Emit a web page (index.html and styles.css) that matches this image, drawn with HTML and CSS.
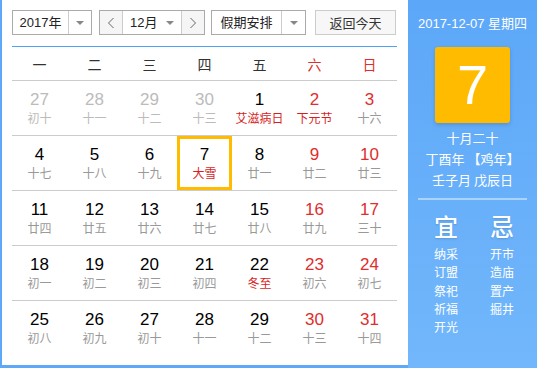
FILE: index.html
```html
<!doctype html>
<html>
  <head>
    <meta charset="UTF-8">
    <title>万年历</title>
    <link rel="stylesheet" href="styles.css">
  </head>
  <body>
    <div class="calendar">
      <main class="main">
        <div class="controls">
          <div class="select year">
            <span class="select-value">2017年</span>
            <span class="select-arrow"><i class="caret"></i></span>
          </div>
          <div class="select month">
            <span class="nav-btn">
              <svg width="8" height="12" viewBox="0 0 8 12"><path d="M6.5 1 L1.5 6 L6.5 11" fill="none" stroke="#666" stroke-width="1"/></svg>
            </span>
            <span class="select-value month-value">12月 <i class="caret"></i></span>
            <span class="nav-btn">
              <svg width="8" height="12" viewBox="0 0 8 12"><path d="M1.5 1 L6.5 6 L1.5 11" fill="none" stroke="#666" stroke-width="1"/></svg>
            </span>
          </div>
          <div class="select holiday">
            <span class="select-value">假期安排</span>
            <span class="select-arrow"><i class="caret"></i></span>
          </div>
          <button class="today-btn">返回今天</button>
        </div>

        <div class="grid">
          <div class="row head">
            <span>一</span><span>二</span><span>三</span><span>四</span><span>五</span><span class="red">六</span><span class="red">日</span>
          </div>
          <div class="row">
            <div class="cell other"><b>27</b><small>初十</small></div>
            <div class="cell other"><b>28</b><small>十一</small></div>
            <div class="cell other"><b>29</b><small>十二</small></div>
            <div class="cell other"><b>30</b><small>十三</small></div>
            <div class="cell"><b>1</b><small class="fest">艾滋病日</small></div>
            <div class="cell weekend"><b>2</b><small class="fest">下元节</small></div>
            <div class="cell weekend"><b>3</b><small>十六</small></div>
          </div>
          <div class="row">
            <div class="cell"><b>4</b><small>十七</small></div>
            <div class="cell"><b>5</b><small>十八</small></div>
            <div class="cell"><b>6</b><small>十九</small></div>
            <div class="cell today"><b>7</b><small class="fest">大雪</small></div>
            <div class="cell"><b>8</b><small>廿一</small></div>
            <div class="cell weekend"><b>9</b><small>廿二</small></div>
            <div class="cell weekend"><b>10</b><small>廿三</small></div>
          </div>
          <div class="row">
            <div class="cell"><b>11</b><small>廿四</small></div>
            <div class="cell"><b>12</b><small>廿五</small></div>
            <div class="cell"><b>13</b><small>廿六</small></div>
            <div class="cell"><b>14</b><small>廿七</small></div>
            <div class="cell"><b>15</b><small>廿八</small></div>
            <div class="cell weekend"><b>16</b><small>廿九</small></div>
            <div class="cell weekend"><b>17</b><small>三十</small></div>
          </div>
          <div class="row">
            <div class="cell"><b>18</b><small>初一</small></div>
            <div class="cell"><b>19</b><small>初二</small></div>
            <div class="cell"><b>20</b><small>初三</small></div>
            <div class="cell"><b>21</b><small>初四</small></div>
            <div class="cell"><b>22</b><small class="fest">冬至</small></div>
            <div class="cell weekend"><b>23</b><small>初六</small></div>
            <div class="cell weekend"><b>24</b><small>初七</small></div>
          </div>
          <div class="row">
            <div class="cell"><b>25</b><small>初八</small></div>
            <div class="cell"><b>26</b><small>初九</small></div>
            <div class="cell"><b>27</b><small>初十</small></div>
            <div class="cell"><b>28</b><small>十一</small></div>
            <div class="cell"><b>29</b><small>十二</small></div>
            <div class="cell weekend"><b>30</b><small>十三</small></div>
            <div class="cell weekend"><b>31</b><small>十四</small></div>
          </div>
        </div>
      </main>

      <aside class="side">
        <div class="side-date">2017-12-07 星期四</div>
        <div class="big-day">7</div>
        <div class="lunar">
          <p>十月二十</p>
          <p>丁酉年 【鸡年】</p>
          <p>壬子月 戊辰日</p>
        </div>
        <div class="divider"></div>
        <div class="advice">
          <div class="advice-col">
            <h2>宜</h2>
            <p>纳采</p><p>订盟</p><p>祭祀</p><p>祈福</p><p>开光</p>
          </div>
          <div class="advice-col">
            <h2>忌</h2>
            <p>开市</p><p>造庙</p><p>置产</p><p>掘井</p>
          </div>
        </div>
      </aside>
    </div>
  </body>
</html>
```

FILE: styles.css
```css
* {
    box-sizing: border-box;
}

body {
    margin: 0;
    font-family: "Liberation Sans", "Noto Sans CJK SC", sans-serif;
    color: #333;
}

.calendar {
    display: flex;
    width: 537px;
    height: 368px;
    border-left: 2px solid #5ea8f8;
    border-bottom: 3px solid #5ea8f8;
    background: #fff;
}

.main {
    width: 406px;
    padding: 10px 11px 0 10px;
}

/* controls */

.controls {
    display: flex;
    height: 25px;
}

.select {
    display: flex;
    height: 25px;
    border: 1px solid #aaa;
    font-size: 13px;
    line-height: 23px;
    color: #222;
}

.year {
    width: 80px;
}

.year .select-value {
    width: 55px;
    text-align: center;
}

.select-arrow {
    flex: 1;
    display: flex;
    align-items: center;
    justify-content: center;
    border-left: 1px solid #ccc;
}

.caret {
    display: inline-block;
    width: 0;
    height: 0;
    border-left: 4px solid transparent;
    border-right: 4px solid transparent;
    border-top: 4px solid #888;
    vertical-align: middle;
}

.month {
    width: 106px;
    margin-left: 7px;
}

.nav-btn {
    width: 22px;
    display: flex;
    align-items: center;
    justify-content: center;
    background: #f5f5f5;
}

.month-value {
    width: 60px;
    text-align: center;
    border-left: 1px solid #ccc;
    border-right: 1px solid #ccc;
}

.month-value .caret {
    margin-left: 5px;
    margin-top: -2px;
}

.holiday {
    width: 95px;
    margin-left: 6px;
}

.holiday .select-value {
    width: 69px;
    text-align: center;
}

.today-btn {
    width: 81px;
    height: 25px;
    margin-left: 9px;
    padding: 0;
    border: 1px solid #ccc;
    background: #f7f7f7;
    font-family: "Noto Sans CJK SC", sans-serif;
    font-size: 13px;
    color: #333;
}

/* grid */

.grid {
    margin-top: 11px;
    width: 385px;
    border-top: 1px solid #4fa3f5;
}

.row {
    display: grid;
    grid-template-columns: repeat(7, 55px);
    height: 55px;
    border-bottom: 1px solid #ccc;
}

.row:last-child {
    border-bottom: none;
}

.head {
    height: 34px;
    align-items: center;
    text-align: center;
    font-family: "Noto Sans CJK SC", sans-serif;
    font-size: 14px;
    color: #333;
}

.red {
    color: #e02d2d;
}

.cell {
    display: flex;
    flex-direction: column;
    align-items: center;
    padding-top: 9px;
    height: 54px;
}

.cell b {
    font-weight: normal;
    font-size: 17px;
    line-height: 20px;
    color: #000;
}

.cell small {
    font-family: "Noto Sans CJK SC", sans-serif;
    font-size: 12px;
    line-height: 16px;
    color: #999;
}

.cell.weekend b {
    color: #e02d2d;
}

.cell.other b,
.cell.other small {
    color: #bbb;
}

.cell small.fest {
    color: #d81e1e;
}

.cell.today {
    border: 3px solid #ffbb00;
    padding-top: 6px;
}

/* side panel */

.side {
    width: 129px;
    margin-bottom: -3px;
    background: linear-gradient(#5ca7f8, #72b7fb);
    color: #fff;
    text-align: center;
    font-family: "Noto Sans CJK SC", sans-serif;
}

.side-date {
    margin-top: 15px;
    font-size: 13px;
    line-height: 18px;
    font-family: "Liberation Sans", "Noto Sans CJK SC", sans-serif;
}

.big-day {
    width: 75px;
    height: 76px;
    margin: 14px auto 0;
    background: #ffbb00;
    border-radius: 3px;
    box-shadow: 0 2px 4px rgba(0, 0, 0, 0.15);
    font-family: "Liberation Sans", sans-serif;
    font-size: 56px;
    line-height: 76px;
}

.lunar {
    margin-top: 4px;
    font-size: 13px;
    line-height: 21px;
}

.lunar p {
    margin: 0;
}

.divider {
    height: 2px;
    margin: 8px 10px 0;
    background: rgba(255, 255, 255, 0.45);
}

.advice {
    display: flex;
    justify-content: center;
    gap: 32px;
    padding-left: 3px;
    margin-top: 11px;
}

.advice-col {
    width: 24px;
}

.advice-col h2 {
    margin: 0 0 4px;
    font-size: 24px;
    line-height: 30px;
    font-weight: 500;
    text-shadow: 0 1px 2px rgba(0, 0, 0, 0.15);
}

.advice-col p {
    margin: 0;
    font-size: 12px;
    line-height: 18.3px;
    white-space: nowrap;
}
```
